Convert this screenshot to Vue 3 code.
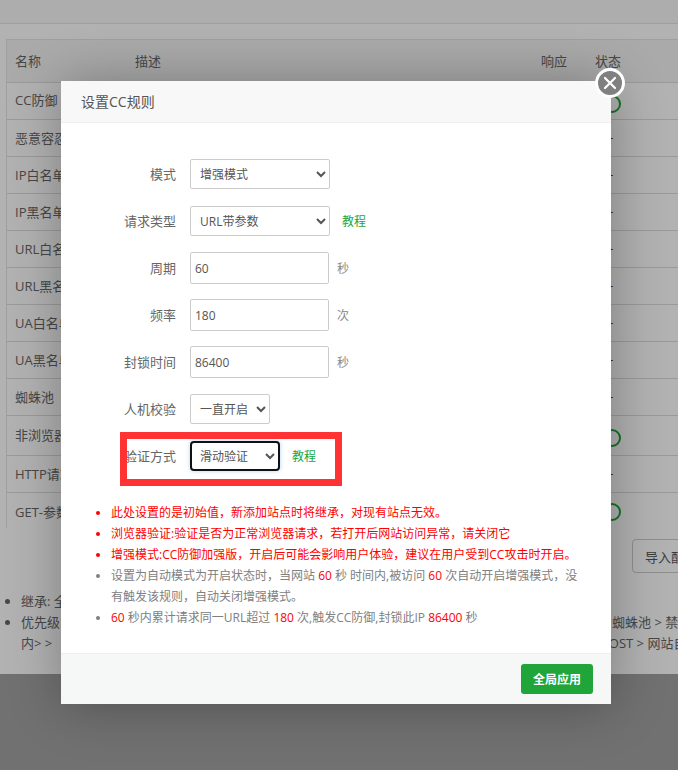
<script setup>
const rows = [
  { name: 'CC防御', on: true, kind: 'first' },
  { name: '恶意容忍度', on: false },
  { name: 'IP白名单', on: false },
  { name: 'IP黑名单', on: false },
  { name: 'URL白名单', on: false },
  { name: 'URL黑名单', on: false },
  { name: 'UA白名单', on: false },
  { name: 'UA黑名单', on: false },
  { name: '蜘蛛池', on: false },
  { name: '非浏览器', on: true, kind: 'tall' },
  { name: 'HTTP请求', on: false },
  { name: 'GET-参数', on: true, kind: 'last' },
]
</script>

<template>
  <div class="root">
    <div class="page">
      <div class="topbar"></div>
      <div class="table">
        <div class="row head">
          <span>名称</span><span>描述</span><span>响应</span><span>状态</span>
        </div>
        <div v-for="r in rows" :key="r.name" class="row" :class="r.kind">
          <span>{{ r.name }}</span><span></span><span></span>
          <span class="status">
            <i v-if="r.on" class="ring"></i>
            <template v-else>-</template>
          </span>
        </div>
      </div>
      <div class="tools"><button class="import">导入配置</button></div>
      <ul class="notes">
        <li><span class="lead">继承: 全局设置</span></li>
        <li><span class="lead">优先级: </span><span>蜘蛛池 &gt; 禁止访问</span></li>
        <li class="cont"><span class="lead">内&gt; &gt; </span><span>POST &gt; 网站自定义</span></li>
      </ul>
    </div>

    <div class="overlay"></div>

    <div class="modal">
      <div class="title">设置CC规则</div>
      <div class="body">
        <div class="field">
          <label>模式</label>
          <select class="sel w140"><option>增强模式</option></select>
        </div>
        <div class="field">
          <label>请求类型</label>
          <select class="sel w140"><option>URL带参数</option></select>
          <a class="link">教程</a>
        </div>
        <div class="field">
          <label>周期</label>
          <input class="inp" value="60" />
          <span class="unit">秒</span>
        </div>
        <div class="field">
          <label>频率</label>
          <input class="inp" value="180" />
          <span class="unit">次</span>
        </div>
        <div class="field">
          <label>封锁时间</label>
          <input class="inp" value="86400" />
          <span class="unit">秒</span>
        </div>
        <div class="field">
          <label>人机校验</label>
          <select class="sel w80"><option>一直开启</option></select>
        </div>
        <div class="field">
          <label>验证方式</label>
          <select class="sel w90 focused"><option>滑动验证</option></select>
          <a class="link near">教程</a>
        </div>

        <ul class="rules">
          <li class="red">此处设置的是初始值，新添加站点时将继承，对现有站点无效。</li>
          <li class="red">浏览器验证:验证是否为正常浏览器请求，若打开后网站访问异常，请关闭它</li>
          <li class="red">增强模式:CC防御加强版，开启后可能会影响用户体验，建议在用户受到CC攻击时开启。</li>
          <li>设置为自动模式为开启状态时，当网站 <b>60</b> 秒 时间内,被访问 <b>60</b> 次自动开启增强模式，没有触发该规则，自动关闭增强模式。</li>
          <li><b>60</b> 秒内累计请求同一URL超过 <b>180</b> 次,触发CC防御,封锁此IP <b>86400</b> 秒</li>
        </ul>
      </div>
      <div class="foot"><button class="apply">全局应用</button></div>

      <button class="close" aria-label="关闭">
        <svg width="14" height="14" viewBox="0 0 14 14">
          <path d="M2 2 L12 12 M12 2 L2 12" stroke="#fff" stroke-width="2.2" stroke-linecap="round" fill="none" />
        </svg>
      </button>
    </div>

    <div class="annotation"></div>
  </div>
</template>

<style>
html, body { margin: 0; padding: 0; }
</style>

<style scoped>
.root {
  position: relative;
  width: 678px;
  height: 770px;
  overflow: hidden;
  background: #a2a2a2;
  font-family: "Open Sans", "Noto Sans CJK SC", sans-serif;
  color: #666;
}
.page {
  height: 674px;
  background: #fff;
  overflow: hidden;
}
.topbar {
  height: 23px;
  background: #f8f8f8;
  border-bottom: 1px solid #e4e4e4;
}
.table {
  margin: 15px 0 0 6px;
  width: 720px;
  border-top: 1px solid #e4e4e4;
  border-left: 1px solid #e4e4e4;
  font-size: 13px;
}
.row {
  display: grid;
  grid-template-columns: 120px 406px 54px 1fr;
  align-items: center;
  box-sizing: border-box;
  height: 37px;
  padding: 0 0 2px 8px;
  border-bottom: 1px solid #ddd;
  white-space: nowrap;
}
.row.head {
  height: 43px;
  padding-bottom: 1px;
  background: #f4f4f4;
}
.row.first { padding-bottom: 4px; }
.row.tall { height: 40px; }
.row.last {
  height: 35px;
  padding: 1px 0 0 8px;
  border-bottom: 0;
}
.status {
  height: 100%;
  display: flex;
  align-items: center;
  padding-left: 14px;
  line-height: 1;
  color: #333;
}
.ring {
  display: block;
  flex: none;
  width: 14px;
  height: 14px;
  margin: 6px 0 0 -6px;
  border: 2px solid #20a53a;
  border-radius: 50%;
}
.row.first .ring { margin-top: 10px; }
.row.last .ring { margin-top: 2px; }
.tools { margin: 11px 0 0 632px; }
.import {
  width: 120px;
  height: 34px;
  padding: 0 0 0 12px;
  text-align: left;
  background: #fff;
  border: 1px solid #ccc;
  border-radius: 4px;
  font: inherit;
  font-size: 13px;
  color: #555;
}
.notes {
  list-style: disc;
  margin: 18px 0 0;
  padding: 0 0 0 21px;
  width: 1000px;
  font-size: 13px;
  line-height: 21px;
  color: #666;
}
.notes li { white-space: nowrap; }
.notes .cont { list-style: none; }
.notes .lead { display: inline-block; width: 591px; }
.notes .cont .lead { width: 580px; }

.overlay {
  position: absolute;
  inset: 0;
  background: rgba(0, 0, 0, 0.3);
}

.modal {
  position: absolute;
  left: 61px;
  top: 81px;
  width: 550px;
  height: 623px;
  display: flex;
  flex-direction: column;
  background: #fff;
  box-shadow: 1px 1px 50px rgba(0, 0, 0, 0.3);
}
.title {
  height: 41px;
  line-height: 41px;
  flex: none;
  padding-left: 20px;
  font-size: 14px;
  color: #555;
  background: #f8f8f8;
  border-bottom: 1px solid #eee;
}
.body {
  flex: 1;
  padding-top: 35px;
}
.field {
  display: flex;
  align-items: center;
  height: 32px;
  margin-bottom: 15px;
  font-size: 13px;
}
.field label {
  width: 115px;
  margin-right: 14px;
  padding-bottom: 2px;
  text-align: right;
  color: #666;
  white-space: nowrap;
}
.sel {
  height: 30px;
  box-sizing: border-box;
  padding: 0 5px;
  background: #fff;
  border: 1px solid #ccc;
  border-radius: 2px;
  font-family: inherit;
  font-size: 12px;
  color: #555;
}
.w140 { width: 140px; }
.w80 { width: 80px; }
.w90 { width: 90px; }
.focused {
  border: 2px solid #111;
  border-radius: 4px;
  padding: 0 4px;
  box-shadow: 0 0 4px rgba(102, 175, 233, 0.5);
}
.inp {
  width: 139px;
  height: 32px;
  box-sizing: border-box;
  padding: 0 4px;
  border: 1px solid #ccc;
  border-radius: 2px;
  font-family: inherit;
  font-size: 12px;
  color: #555;
}
.unit {
  margin-left: 8px;
  font-size: 12px;
  color: #888;
}
.link {
  margin-left: 12px;
  font-size: 12px;
  color: #20a53a;
}
.rules {
  list-style: disc;
  margin: 30px 30px 0 50px;
  padding: 0;
  font-size: 12px;
  line-height: 21px;
  color: #808080;
}
.rules b { font-weight: 400; color: #f00; }
.rules .red { color: #f00; }
.foot {
  flex: none;
  height: 50px;
  display: flex;
  align-items: center;
  justify-content: flex-end;
  padding-right: 18px;
  background: #f6f8f8;
  border-top: 1px solid #eee;
}
.apply {
  width: 72px;
  height: 30px;
  border: 0;
  border-radius: 3px;
  background: #20a53a;
  color: #fff;
  font-family: inherit;
  font-size: 12px;
  font-weight: 700;
}
.close {
  position: absolute;
  right: -14px;
  top: -13px;
  width: 30px;
  height: 30px;
  padding: 0;
  box-sizing: border-box;
  display: flex;
  align-items: center;
  justify-content: center;
  border: 3px solid #fff;
  border-radius: 50%;
  background: #808080;
}
.annotation {
  position: absolute;
  left: 120px;
  top: 432px;
  width: 222px;
  height: 54px;
  box-sizing: border-box;
  border: 7px solid #ff3333;
}
</style>
